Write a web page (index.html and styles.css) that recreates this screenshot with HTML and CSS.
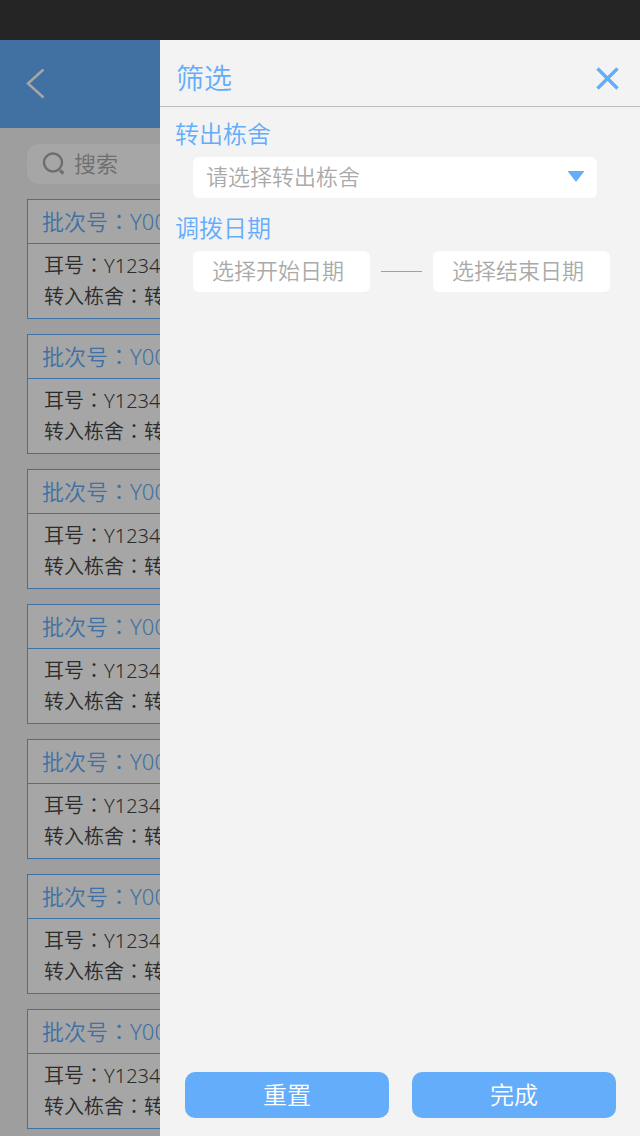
FILE: index.html
```html
<!DOCTYPE html>
<html lang="zh-CN">
<head>
<meta charset="utf-8">
<meta name="viewport" content="width=device-width, initial-scale=1">
<title>筛选</title>
<link rel="stylesheet" href="styles.css">
</head>
<body>
<div class="status-bar"></div>
<div class="screen">
  <div class="page">
    <header class="page-header">
      <button class="icon-button" type="button" aria-label="返回">
        <svg width="20" height="32" viewBox="0 0 20 32" fill="none" stroke="currentColor" stroke-width="2.5"><path d="M17.5 1.5 2 15.5l15.500 14"/></svg>
      </button>
    </header>
    <main class="content">
      <label class="search">
        <svg width="24" height="24" viewBox="0 0 24 24" fill="none" stroke="currentColor"><circle cx="11" cy="10.500" r="9" stroke-width="2.4"/><path d="m18 18.500 3.500 3" stroke-width="3"/></svg>
        <input class="search-input" type="search" placeholder="搜索" aria-label="搜索">
      </label>
      <article class="card"><h2 class="card-title">批次号<span class="colon" lang="zh-Hant">：</span>Y00</h2><div class="card-body"><p>耳号<span class="colon" lang="zh-Hant">：</span>Y1234</p><p>转入栋舍<span class="colon" lang="zh-Hant">：</span>转</p></div></article>
      <article class="card"><h2 class="card-title">批次号<span class="colon" lang="zh-Hant">：</span>Y00</h2><div class="card-body"><p>耳号<span class="colon" lang="zh-Hant">：</span>Y1234</p><p>转入栋舍<span class="colon" lang="zh-Hant">：</span>转</p></div></article>
      <article class="card"><h2 class="card-title">批次号<span class="colon" lang="zh-Hant">：</span>Y00</h2><div class="card-body"><p>耳号<span class="colon" lang="zh-Hant">：</span>Y1234</p><p>转入栋舍<span class="colon" lang="zh-Hant">：</span>转</p></div></article>
      <article class="card"><h2 class="card-title">批次号<span class="colon" lang="zh-Hant">：</span>Y00</h2><div class="card-body"><p>耳号<span class="colon" lang="zh-Hant">：</span>Y1234</p><p>转入栋舍<span class="colon" lang="zh-Hant">：</span>转</p></div></article>
      <article class="card"><h2 class="card-title">批次号<span class="colon" lang="zh-Hant">：</span>Y00</h2><div class="card-body"><p>耳号<span class="colon" lang="zh-Hant">：</span>Y1234</p><p>转入栋舍<span class="colon" lang="zh-Hant">：</span>转</p></div></article>
      <article class="card"><h2 class="card-title">批次号<span class="colon" lang="zh-Hant">：</span>Y00</h2><div class="card-body"><p>耳号<span class="colon" lang="zh-Hant">：</span>Y1234</p><p>转入栋舍<span class="colon" lang="zh-Hant">：</span>转</p></div></article>
      <article class="card"><h2 class="card-title">批次号<span class="colon" lang="zh-Hant">：</span>Y00</h2><div class="card-body"><p>耳号<span class="colon" lang="zh-Hant">：</span>Y1234</p><p>转入栋舍<span class="colon" lang="zh-Hant">：</span>转</p></div></article>
    </main>
  </div>
  <div class="backdrop"></div>
  <form class="drawer" role="dialog" aria-labelledby="drawer-title">
    <div class="drawer-header">
      <h1 class="drawer-title" id="drawer-title">筛选</h1>
      <button class="icon-button" type="button" aria-label="关闭">
        <svg width="23" height="23" viewBox="0 0 23 23" fill="none" stroke="currentColor" stroke-width="3.4"><path d="m1.5 1.5 20 20m0-20-20 20"/></svg>
      </button>
    </div>
    <div class="fields">
      <div class="field">
        <label class="field-label" for="barn">转出栋舍</label>
        <div class="select-box">
          <select class="control select" id="barn"><option>请选择转出栋舍</option></select>
          <svg class="caret" width="18" height="12" viewBox="0 0 18 12" fill="currentColor"><path d="M.5 0h17L9 11z"/></svg>
        </div>
      </div>
      <div class="field">
        <label class="field-label" for="start">调拨日期</label>
        <div class="range">
          <input class="control date" id="start" type="text" placeholder="选择开始日期">
          <span class="dash"></span>
          <input class="control date" type="text" placeholder="选择结束日期" aria-label="选择结束日期">
        </div>
      </div>
    </div>
    <div class="actions">
      <button class="action" type="reset">重置</button>
      <button class="action" type="submit">完成</button>
    </div>
  </form>
</div>
</body>
</html>
```

FILE: styles.css
```css
* {
  box-sizing: border-box;
}

body {
  margin: 0;
  min-height: 100vh;
  display: flex;
  flex-direction: column;
  background: #f3f3f3;
  font-family: "Noto Sans", "Noto Sans CJK SC", sans-serif;
  font-weight: 350;
}

h1, h2, p {
  margin: 0;
  font-weight: 350;
}

button, input, select {
  margin: 0;
  padding: 0;
  border: 0;
  background: none;
  color: inherit;
  font: inherit;
}

svg {
  display: block;
  flex: none;
}

.status-bar {
  height: 40px;
  background: #252525;
}

.screen {
  position: relative;
  flex: 1;
  overflow: hidden;
}

.page-header {
  display: flex;
  align-items: center;
  height: 88px;
  padding: 0 26px;
  background: #64adfb;
  color: #fff;
}

.content {
  display: flex;
  flex-direction: column;
  gap: 15px;
  padding: 16px 27px 7px;
}

.search {
  display: flex;
  align-items: center;
  gap: 8px;
  height: 40px;
  padding: 0 15px;
  border-radius: 12px;
  background: #fff;
  color: #aaa;
  font-size: 22px;
}

.search-input {
  flex: 1;
  min-width: 0;
  height: 100%;
  padding-bottom: 2px;
}

::placeholder {
  color: #aaa;
  opacity: 1;
}

.card {
  border: 1px solid #64adfb;
  background: #fff;
}

.card-title {
  height: 44px;
  padding: 0 14px;
  border-bottom: 1px solid #64adfb;
  color: #64adfb;
  font-size: 22px;
  line-height: 42px;
}

.card-body {
  padding: 6px 16px;
  color: #444;
  font-size: 20px;
  line-height: 31px;
}

.colon {
  font-family: "Noto Sans CJK TC", sans-serif;
  line-height: 1;
}

.backdrop {
  position: absolute;
  inset: 0;
  background: rgba(0, 0, 0, 0.35);
}

.drawer {
  position: absolute;
  inset: 0 0 0 25%;
  display: flex;
  flex-direction: column;
  background: #f3f3f3;
  color: #64adfb;
}

.drawer-header {
  display: flex;
  align-items: center;
  justify-content: space-between;
  padding: 10px 21px 0 16px;
  border-bottom: 1px solid #bfbfbf;
}

.drawer-title {
  font-size: 28px;
  line-height: 56px;
}

.fields {
  flex: 1;
  display: flex;
  flex-direction: column;
  gap: 13px;
  padding: 10px 30px 0 15px;
}

.field-label {
  display: block;
  margin-bottom: 6px;
  font-size: 24px;
  line-height: 34px;
}

.control {
  width: 100%;
  min-width: 0;
  height: 41px;
  border-radius: 6px;
  background: #fff;
  color: #aaa;
  font-size: 22px;
}

.select-box {
  position: relative;
  margin: 0 13px 0 18px;
}

.select {
  display: block;
  appearance: none;
  padding: 0 40px 3px 13px;
}

.caret {
  position: absolute;
  top: 14px;
  right: 12px;
  pointer-events: none;
}

.range {
  display: flex;
  align-items: center;
  gap: 11px;
  margin-left: 18px;
}

.date {
  flex: 1;
  padding: 0 19px 4px;
}

.dash {
  width: 41px;
  height: 1px;
  background: #64adfb;
}

.actions {
  display: flex;
  gap: 23px;
  padding: 0 24px 18px 25px;
}

.action {
  flex: 1;
  height: 46px;
  padding-bottom: 3px;
  border-radius: 10px;
  background: #64adfb;
  color: #fff;
  font-size: 24px;
}
```
